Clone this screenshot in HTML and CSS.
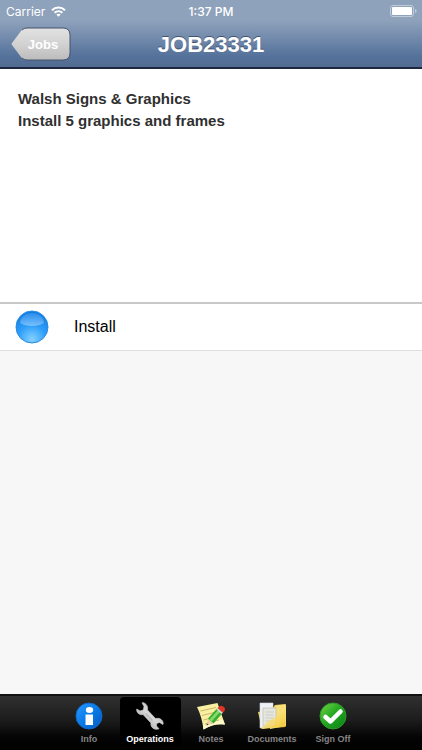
FILE: index.html
```html
<!DOCTYPE html>
<html lang="en">
<head>
<meta charset="utf-8">
<meta name="viewport" content="width=device-width, initial-scale=1">
<title>JOB23331</title>
<link rel="stylesheet" href="styles.css">
</head>
<body>
<header class="top">
  <div class="status">
    <div class="carrier">
      <span>Carrier</span>
      <svg width="15" height="11" viewBox="0 0 15 11" aria-hidden="true"><g fill="none" stroke="#fff" stroke-width="2"><path d="M1 4.2C4.7.6 10.3.6 14 4.2"/><path d="M3.600 6.800c2.200-2.100 5.600-2.100 7.800 0"/></g><path fill="#fff" d="M5.300 8.500c1.300-1.100 3.100-1.100 4.400 0L7.500 10.800z"/></svg>
    </div>
    <span class="time">1:37 PM</span>
    <div class="battery">
      <svg width="27" height="12" viewBox="0 0 27 12" aria-hidden="true"><rect x=".5" y=".5" width="23" height="11" rx="2.500" fill="none" stroke="#c0cbda"/><rect x="2" y="2" width="20" height="8" rx="1" fill="#fff"/><path fill="#c0cbda" d="M25 4c2 .5 2 3.500 0 4z"/></svg>
    </div>
  </div>
  <nav class="navbar">
    <button class="back" type="button">
      <svg class="back-shape" width="60" height="35" viewBox="0 0 60 35" aria-hidden="true">
        <defs><linearGradient id="silver" x2="0" y2="1"><stop stop-color="#e2e2e2"/><stop offset=".5" stop-color="#d2d2d2"/><stop offset="1" stop-color="#bcbcbc"/></linearGradient></defs>
        <path d="M15.500 1H52Q59 1 59 8V26Q59 33 52 33H15.500Q12 33 10 30L1 18Q0 17 1 16L10 4Q12 1 15.500 1Z" fill="url(#silver)"/>
        <path d="M11 3Q13 1 16 1H52Q59 1 59 8V26Q59 33 52 33H16Q13 33 11 31" fill="none" stroke="#47536b"/>
      </svg>
      <span class="back-label">Jobs</span>
    </button>
    <h1>JOB23331</h1>
  </nav>
</header>
<main>
  <section class="summary">
    <p>Walsh Signs &amp; Graphics</p>
    <p>Install 5 graphics and frames</p>
  </section>
  <ul class="operations">
    <li>
      <button class="operation" type="button">
        <svg width="34" height="34" viewBox="0 0 34 34" aria-hidden="true">
          <defs>
            <radialGradient id="orb" cx=".5" cy=".88" r=".85"><stop stop-color="#86d2ff"/><stop offset=".5" stop-color="#2f9ffb"/><stop offset="1" stop-color="#0f7ce6"/></radialGradient>
            <linearGradient id="shine" x2="0" y2="1"><stop stop-color="#fff" stop-opacity=".1"/><stop offset="1" stop-color="#fff" stop-opacity=".34"/></linearGradient>
          </defs>
          <circle cx="17" cy="17" r="16" fill="url(#orb)" stroke="#2c8ade"/>
          <path d="M5 13C6 6 11 3 17 3s11 3 12 10c-6 4-18 4-24 0z" fill="url(#shine)"/>
        </svg>
        <span>Install</span>
      </button>
    </li>
  </ul>
</main>
<footer class="tabbar">
  <button class="tab" type="button">
    <svg width="28" height="28" viewBox="0 0 28 28" aria-hidden="true">
      <defs><linearGradient id="info" x2="1" y2="1"><stop stop-color="#2b9aff"/><stop offset=".5" stop-color="#087be9"/><stop offset="1" stop-color="#0758bd"/></linearGradient></defs>
      <circle cx="14" cy="14" r="13" fill="url(#info)" stroke="#1268c8"/>
      <ellipse cx="14.500" cy="8" rx="3.700" ry="3" fill="#fff"/><path fill="#fff" d="M10.500 12.500h7.500V23h-7.500z"/>
    </svg>
    <span>Info</span>
  </button>
  <button class="tab selected" type="button" aria-current="page">
    <svg width="28" height="28" viewBox="0 0 28 28" aria-hidden="true">
      <defs><linearGradient id="steel" x1="0" y1="1" x2="1" y2="0"><stop stop-color="#8c8c8c"/><stop offset=".5" stop-color="#d8d8d8"/><stop offset="1" stop-color="#b0b0b0"/></linearGradient></defs>
      <path d="M6 .8C9 .2 12.300 3.500 11.500 8L19.500 16.500C24 15.500 28 18.500 27 22.500L23.500 20.500 20.500 21.500 20.500 24 23 26.800C19 28.500 14 25.500 15 21L7 12.500C3.500 13.500 0 10.500 .8 7L4 9 7.300 8 8 4.500Z" fill="url(#steel)" stroke="#c9c9c9" stroke-width=".7"/>
      <path d="M10 11.500L16.500 18.500" stroke="#b8b8b8" stroke-width="1.500"/>
    </svg>
    <span>Operations</span>
  </button>
  <button class="tab" type="button">
    <svg width="30" height="28" viewBox="0 0 30 28" aria-hidden="true">
      <path d="M1 5L21.500 1 29 22.500Q18 21 7.500 27.500Q6 15 1 5Z" fill="#f8efa0"/>
      <path d="M7.500 27.500Q18 21 29 22.500L27 18Q16 18 7 24Z" fill="#fff9c9"/>
      <path d="M4.500 9L20 5.500M6 13.500L20 10M7.500 18L21 14.500M9 22L23 18" stroke="#c9b66c"/>
      <path d="M10.500 23.500L12 16.500 17.500 21.500Z" fill="#ead1a0"/><path d="M10.500 23.500L11 21.500 12.500 22.500Z" fill="#333"/>
      <path d="M12 16.500L21 6.500 26.500 11 17.500 21.500Z" fill="#39ac32"/><path d="M13.500 17.500L22.500 7.500 24.500 9.500 15.500 19.500Z" fill="#83dc68"/>
      <path d="M20.500 7.500L22 6 27 10.500 25.500 12Z" fill="#d5d5d5"/>
      <path d="M21.500 6L23.500 4.200Q26 3 28.500 5.500Q30 8 27 10.700Z" fill="#df3525"/>
    </svg>
    <span>Notes</span>
  </button>
  <button class="tab" type="button">
    <svg width="30" height="28" viewBox="0 0 30 28" aria-hidden="true">
      <defs><linearGradient id="folder" x2="1" y2="1"><stop stop-color="#fff1a0" stop-opacity=".5"/><stop offset="1" stop-color="#f0c42e"/></linearGradient></defs>
      <path d="M1 10L15 7 18 3 28.500 2V23L5 27Z" fill="#efd163"/>
      <path d="M3 1L16 1V25L3 26Z" fill="#eef1f5" stroke="#d1d5db" stroke-width=".6"/>
      <path d="M13 8L18 7 20 3.500 29 2.500V24L13 27Z" fill="#f7df78"/>
      <path d="M6 6H19V24L6 24.500Z" fill="#e5e6dc" stroke="#b9bdb8" stroke-width=".7"/>
      <path d="M8.500 10H16.500M8.500 13H16.500M8.500 16H16.500M8.500 19H16.500" stroke="#c9ccc8"/>
      <path d="M4 27L10 20 28.500 9V25Z" fill="url(#folder)"/>
    </svg>
    <span>Documents</span>
  </button>
  <button class="tab" type="button">
    <svg width="28" height="28" viewBox="0 0 28 28" aria-hidden="true">
      <defs><linearGradient id="ok" x2="1" y2="1"><stop stop-color="#79d64a"/><stop offset=".45" stop-color="#25aa22"/><stop offset="1" stop-color="#078014"/></linearGradient></defs>
      <circle cx="14" cy="14" r="13" fill="url(#ok)" stroke="#2c9b27"/>
      <path d="M6.500 15L11.500 19.500 21.500 9.500" fill="none" stroke="#fff" stroke-width="4.500" stroke-linejoin="round" stroke-linecap="round"/>
    </svg>
    <span>Sign Off</span>
  </button>
</footer>
</body>
</html>
```
FILE: styles.css
```css
* {
  box-sizing: border-box;
}

body {
  margin: 0;
  min-height: 100vh;
  display: flex;
  flex-direction: column;
  background: #f7f7f7;
  font-family: "Liberation Sans", Arial, sans-serif;
}

button {
  margin: 0;
  padding: 0;
  border: 0;
  background: none;
  font: inherit;
}

svg {
  display: block;
  flex: none;
}

.top {
  border-bottom: 2px solid #1d2740;
  background: linear-gradient(#8fa2bc 0, #8fa2bc 30%, #54719a 85%, #526c90 100%);
  color: #fff;
}

.status {
  display: grid;
  grid-template-columns: 1fr auto 1fr;
  align-items: center;
  height: 22px;
  padding: 0 5px;
  font-family: Inter, "Liberation Sans", sans-serif;
  font-size: 12px;
}

.carrier {
  display: flex;
  align-items: center;
  gap: 6px;
  padding-left: 1px;
}

.time {
  font-weight: 500;
}

.battery {
  justify-self: end;
}

.navbar {
  display: grid;
  grid-template-columns: 1fr auto 1fr;
  align-items: center;
  height: 45px;
  padding: 0 11px;
}

.back {
  display: grid;
  justify-self: start;
  align-items: center;
  color: #fff;
}

.back-shape,
.back-label {
  grid-area: 1 / 1;
}

.back-label {
  padding-left: 4px;
  font-size: 13px;
  font-weight: bold;
}

h1 {
  margin: 0;
  font-size: 22px;
  line-height: 28px;
  font-weight: bold;
  text-shadow: 0 -1px 0 #43536d;
}

main {
  flex: 1;
}

.summary {
  min-height: 235px;
  padding: 19px 18px;
  border-bottom: 2px solid #c8c8c8;
  background: #fff;
  color: #303030;
  font-size: 15px;
  line-height: 22px;
  font-weight: bold;
}

.summary p {
  margin: 0;
}

.operations {
  margin: 0;
  padding: 0;
  list-style: none;
}

.operation {
  display: flex;
  align-items: center;
  gap: 25px;
  width: 100%;
  height: 47px;
  padding: 0 15px;
  border-bottom: 1px solid #dedede;
  background: #fff;
  color: #000;
  font-size: 16px;
}

.tabbar {
  display: flex;
  justify-content: center;
  height: 56px;
  padding-top: 1px;
  border-top: 2px solid #111;
  background: linear-gradient(#303030, #1c1c1c 45%, #050505 75%, #000);
}

.tab {
  display: flex;
  flex-direction: column;
  align-items: center;
  justify-content: center;
  gap: 3px;
  width: 61px;
  height: 50px;
  padding-top: 3px;
  border-radius: 4px;
  color: #858585;
  font-size: 9px;
  line-height: 12px;
  font-weight: bold;
}

.selected {
  background: #000;
  color: #fff;
}
```
